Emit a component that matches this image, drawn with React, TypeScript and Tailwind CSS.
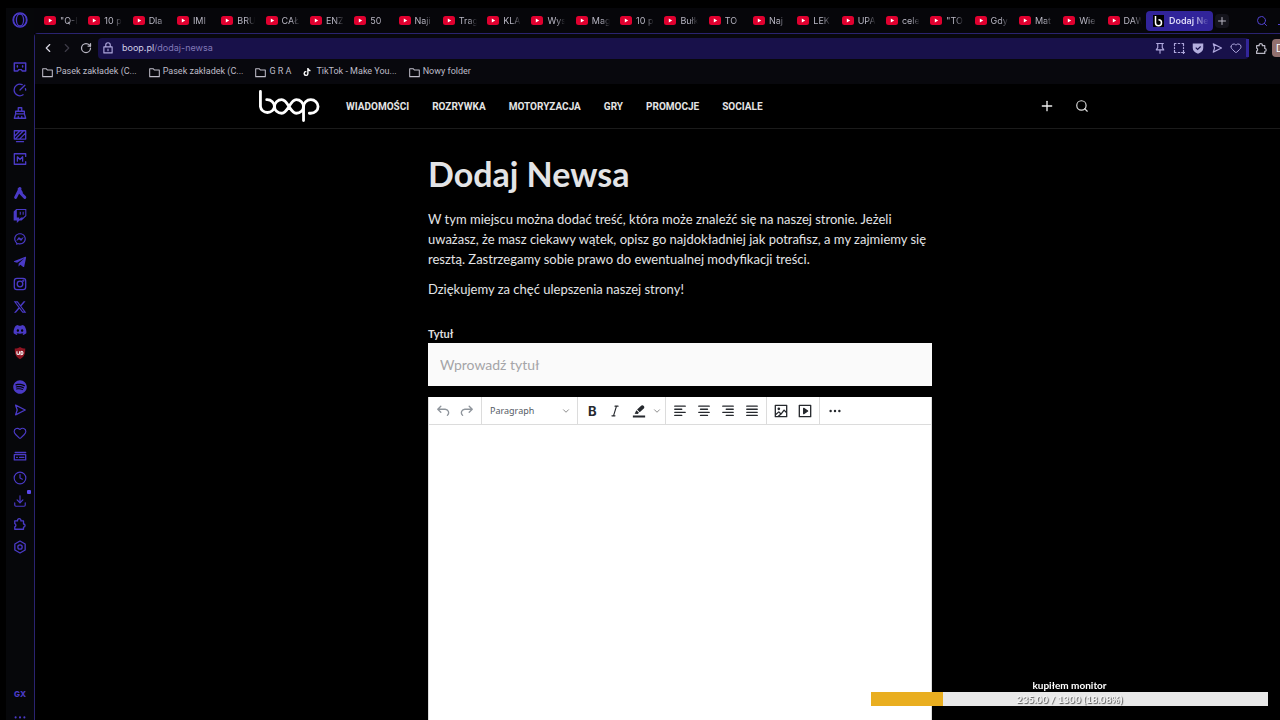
import type { ReactNode } from "react";
import {
  ChevronDown,
  ChevronLeft,
  ChevronRight,
  Clock,
  Download,
  Heart,
  Plus,
  RotateCw,
  Search,
} from "lucide-react";
import { FaDiscord, FaSpotify, FaTelegramPlane, FaTiktok, FaTwitch } from "react-icons/fa";
import { FaXTwitter } from "react-icons/fa6";
import { RiMessengerLine } from "react-icons/ri";

const tabs = [
  '"Q-I', "10 p", "Dla", "IMI", "BRU", "CAŁ", "ENZ", "50", "Naji", "Trag", "KLA", "Wys", "Mag",
  "10 p", "Bułk", "TO", "Naj", "LEK", "UPA", "cele", '"TO', "Gdy", "Mat", "Wie", "DAW",
];

const bookmarks = ["Pasek zakładek (C...", "Pasek zakładek (C...", "G R A", "TikTok - Make You...", "Nowy folder"];

const navigation = ["WIADOMOŚCI", "ROZRYWKA", "MOTORYZACJA", "GRY", "PROMOCJE", "SOCIALE"];

function Icon({ children, className = "size-3.5", width = 1.5 }: { children: ReactNode; className?: string; width?: number }) {
  return (
    <svg viewBox="0 0 16 16" className={className} fill="none" stroke="currentColor" strokeWidth={width} strokeLinejoin="round" strokeLinecap="round" aria-hidden="true">
      {children}
    </svg>
  );
}

const sendPath = <path d="M3 2.5 14 8 3 13.5 4.8 8Z" />;
const puzzlePath = (
  <path d="M2 4.500h3.200a2 2 0 1 1 3.800 0h3V8a1.800 1.800 0 1 1 0 3.600V14H2v-2.800a1.900 1.900 0 0 0 0-3.600Z" />
);

const topTools: [string, ReactNode][] = [
  ["Games", <Icon width={1.700}><path d="M1.500 3.500h13v9h-4L9.500 11h-3l-1 1.500h-4Z" /><path d="M5 6.500v1.500M11 6.500v1.500" /></Icon>],
  ["GX Control", <Icon><path d="M11.500 13.500A6.600 6.600 0 1 1 10.500 1.900M8 8l5.500-5.500M14.200 6.500l.3 1.500" /></Icon>],
  ["GX Cleaner", <Icon><path d="M6 6V2h4v4M3 6h10v3H3ZM3 9l-1.500 5h13L13 9M6 14v-2M10 14v-2" /></Icon>],
  ["Wallpapers", <Icon><path d="M1.500 2h13v9.500h-13ZM4 14.500h8M2 8l6-6M3 11l9-9M8 11l6-6" /></Icon>],
  ["Mods", <Icon><path d="M14.500 5V2h-13v12h13v-3M5 10.500v-5l3 3 3-3v5" /></Icon>],
];

const socialTools: [string, ReactNode][] = [
  ["Aria", <Icon width={3.400}><path d="M3 13 8 3M8.500 8l5 5" /><path d="M7 3.500l2.500 4" /></Icon>],
  ["Twitch", <FaTwitch className="size-3.5" />],
  ["Messenger", <RiMessengerLine className="size-3.5" />],
  ["Telegram", <FaTelegramPlane className="size-3.5" />],
  ["Instagram", <Icon><rect x="1.500" y="1.500" width="13" height="13" rx="3" /><circle cx="8" cy="8" r="3.200" /><circle cx="11.800" cy="4.200" r=".5" /></Icon>],
  ["X", <FaXTwitter className="size-3.5" />],
  ["Discord", <FaDiscord className="size-3.5" />],
  ["uBlock", (
    <svg viewBox="0 0 16 16" className="size-3.5" aria-hidden="true">
      <path d="M8 1c2 1.500 4 1.800 6 1.800C14 9 13 12.500 8 15 3 12.500 2 9 2 2.800 4 2.800 6 2.500 8 1Z" fill="#8d1422" />
      <path d="M4.500 6v2.500c0 1.500 3 1.500 3 0V6M9.200 6v4c3 0 3-4 0-4" fill="none" stroke="#eee" strokeWidth="1.300" />
    </svg>
  )],
];

const browserTools: [string, ReactNode][] = [
  ["Player", <FaSpotify className="size-3.5" />],
  ["My Flow", <Icon>{sendPath}</Icon>],
  ["Pinboards", <Heart className="size-3.5" />],
  ["News", <Icon><path d="M2.500 4h12M1.500 6.500h13v6h-13ZM4 9.500h1M7.500 9.500h5" /></Icon>],
  ["History", <Clock className="size-3.5" />],
  ["Downloads", <Download className="size-3.5" />],
  ["Extensions", <Icon>{puzzlePath}</Icon>],
  ["Settings", <Icon><path d="M8 1.200 13.900 4.600v6.800L8 14.800 2.100 11.400V4.600Z" /><circle cx="8" cy="8" r="2.500" /></Icon>],
];

function ToolGroup({ tools, className }: { tools: [string, ReactNode][]; className: string }) {
  return (
    <div className={`flex w-full flex-col ${className}`}>
      {tools.map(([name, icon]) => (
        <button key={name} aria-label={name} className="relative flex flex-1 items-center justify-center">
          {icon}
          {name === "Downloads" && <span className="absolute top-0 right-[3px] size-1 rounded-[1px] bg-[#5a48ea]" />}
        </button>
      ))}
    </div>
  );
}

function Sidebar() {
  return (
    <aside className="flex w-7 shrink-0 flex-col items-center bg-[#06070a] text-[#4a3ac6]">
      <button aria-label="Opera GX" className="mt-1 flex h-4 items-center">
        <svg viewBox="0 0 16 16" className="size-4" fill="none" stroke="currentColor" strokeWidth="1.300" aria-hidden="true">
          <circle cx="8" cy="8" r="7" />
          <ellipse cx="8" cy="8" rx="3.600" ry="6" />
          <path d="M6 1.500a7 7 0 0 0 0 13M10 1.500a7 7 0 0 1 0 13" />
        </svg>
      </button>
      <ToolGroup tools={topTools} className="mt-[27px] h-[115px]" />
      <ToolGroup tools={socialTools} className="mt-3 h-[182px]" />
      <ToolGroup tools={browserTools} className="mt-3 h-[182px]" />
      <div className="mt-auto flex flex-col items-center">
        <span className="text-[8px] leading-4 font-extrabold">GX</span>
        <button aria-label="More" className="flex h-[18px] items-end">
          <Icon width={2.400}><path d="M3 13h0M8 13h0M13 13h0" /></Icon>
        </button>
      </div>
    </aside>
  );
}

function TabStrip() {
  return (
    <div className="flex h-[25px] shrink-0 items-center bg-[#06060a] text-[9px] text-[#b9b7c4]">
      <div role="tablist" className="flex w-[1110px] shrink-0 items-center pl-0.5">
        {tabs.map((title, index) => (
          <button key={index} role="tab" className="flex min-w-0 flex-1 items-center gap-1 pl-2">
            <svg viewBox="0 0 12 9" className="h-[9px] w-3 shrink-0" aria-hidden="true">
              <rect width="12" height="9" rx="2.500" fill="#e0002f" />
              <path d="M4.800 2.500v4l3.400-2Z" fill="#fff" />
            </svg>
            <span className="w-[18px] overflow-hidden whitespace-nowrap text-left [mask-image:linear-gradient(to_right,#000_50%,transparent)]">
              {title}
            </span>
          </button>
        ))}
      </div>
      <button role="tab" aria-selected="true" className="ml-0.5 flex h-5 w-[67px] shrink-0 items-center gap-[5px] rounded-sm bg-[#31249a] pl-[7px] font-semibold text-[#dcd9f5]">
        <span className="flex h-3 w-[11px] shrink-0 items-center justify-center bg-black">
          <svg viewBox="0 0 11 12" className="h-3 w-[11px]" fill="none" stroke="#fff" strokeWidth="1.500" aria-hidden="true">
            <path d="M2.500 1v6.800a3 3 0 1 0 3-3" />
          </svg>
        </span>
        <span className="overflow-hidden whitespace-nowrap [mask-image:linear-gradient(to_right,#000_60%,transparent)]">Dodaj Ne</span>
      </button>
      <button aria-label="New tab" className="ml-0.5 flex size-3.5 shrink-0 items-center justify-center rounded-sm bg-[#14141c]">
        <Plus className="size-3" />
      </button>
      <button aria-label="Search tabs" className="ml-[27px] text-[#5142d0]">
        <Search className="size-3" />
      </button>
      <button aria-label="Minimize" className="ml-2.5 h-2 w-3 border-b border-[#5142d0]" />
    </div>
  );
}

function AddressBar() {
  return (
    <div className="flex h-[26px] shrink-0 items-center bg-[#08080d] pt-0.5 pl-[3px] text-[#b9b7c4]">
      <button aria-label="Back" className="flex w-[19px] justify-center text-[#dad8e4]"><ChevronLeft className="size-3.5" /></button>
      <button aria-label="Forward" className="flex w-[19px] justify-center text-[#3d3b47]"><ChevronRight className="size-3.5" /></button>
      <button aria-label="Reload" className="flex w-[19px] justify-center"><RotateCw className="size-3" strokeWidth={2.500} /></button>
      <div className="ml-[3px] flex h-[21px] w-[1151px] shrink-0 items-center rounded-sm bg-[#18114a] pl-1 text-[#b0a9de]">
        <Icon className="size-3"><path d="M2.500 6.500h11v8h-11ZM5 6.500V4a3 3 0 0 1 6 0v2.500M8 9.500v2" /></Icon>
        <a href="#address" className="ml-2 text-[9px] text-[#8279b8]">
          <span className="text-[#d2cfe6]">boop.pl</span>/dodaj-newsa
        </a>
        <div className="ml-auto flex items-center gap-[7px]">
          <button aria-label="Pin"><Icon className="size-3"><path d="M3.500 2h9M5 2v5.500L3 10.500h10l-2-3V2M8 10.500V15" /></Icon></button>
          <button aria-label="Snapshot"><Icon className="size-3" width={1.600}><path d="M2 5V2h2M7 2h2M12 2h2v3M14 7.500v1M2 7.500v1M2 11v3h2M7 14h2M14 11v5M11.500 14H16" /></Icon></button>
          <button aria-label="Ad blocker">
            <svg viewBox="0 0 16 16" className="size-3" aria-hidden="true">
              <path d="M1 2h14v6c0 4-3 6-7 7.500C4 14 1 12 1 8Z" fill="#b3aedd" />
              <path d="m5 7.500 2.500 2.500L11.500 6" fill="none" stroke="#18114a" strokeWidth="1.600" />
            </svg>
          </button>
          <button aria-label="My Flow"><Icon className="size-3">{sendPath}</Icon></button>
          <button aria-label="Pinboards"><Heart className="size-3" /></button>
        </div>
        <span className="ml-1 h-[18px] w-[3px] bg-[#33269b]" />
      </div>
      <button aria-label="Extensions" className="ml-1.5"><Icon className="size-[13px]">{puzzlePath}</Icon></button>
      <button className="ml-1 h-[18px] w-[18px] shrink-0 rounded-sm bg-[#92706e] pl-1 text-left text-[10px] text-white">D</button>
    </div>
  );
}

function Bookmarks() {
  return (
    <div className="flex h-6 shrink-0 items-center gap-3 bg-[#08080d] pl-[7px] font-['Roboto',sans-serif] text-[9px] text-[#bebcc8]">
      {bookmarks.map((name, index) => (
        <a key={index} href="#bookmark" className="flex items-center gap-[3px] whitespace-nowrap">
          {name.startsWith("TikTok") ? (
            <FaTiktok className="mr-0.5 size-2 text-white" />
          ) : (
            <Icon className="size-[11px]"><path d="M1 2.500h5l2 2h7v9.500H1Z" /></Icon>
          )}
          {name}
        </a>
      ))}
    </div>
  );
}

function SiteHeader() {
  return (
    <header className="border-b border-[#1b1b1b]">
      <div className="mx-auto flex h-11 w-full max-w-[844px] items-center">
        <a href="#home" aria-label="boop">
          <svg viewBox="0 0 64 35" className="h-[34px] w-[62px]" fill="none" stroke="#fff" strokeWidth="2.900" strokeLinecap="round" aria-hidden="true">
            <path d="M2.500 2.500V18A7.300 7 0 0 0 17 18 7.500 7 0 0 0 9.500 11H9" />
            <path d="M17 18A7.500 7 0 0 1 24.500 11C31 11 33 25 39.500 25A7.500 7 0 0 0 47 18 7.500 7 0 0 0 39.500 11C33 11 31 25 24.500 25A7.500 7 0 0 1 17 18Z" />
            <path d="M47 32.500V18A7.500 7 0 1 1 54.500 25H53" />
          </svg>
        </a>
        <nav className="ml-[26px] flex gap-[23px] font-['Roboto',sans-serif] text-[10px] font-bold text-[#e4e4e4]">
          {navigation.map((item) => (
            <a key={item} href="#section">{item}</a>
          ))}
        </nav>
        <button aria-label="Dodaj" className="ml-auto text-[#eee]"><Plus className="size-4" /></button>
        <button aria-label="Szukaj" className="mr-[13px] ml-5 text-[#ddd]"><Search className="size-3.5" /></button>
      </div>
    </header>
  );
}

const alignments: [string, string][] = [
  ["Align left", "M2 2.500h12M2 6h8M2 9.500h12M2 13h8"],
  ["Align center", "M2 2.500h12M4 6h8M2 9.500h12M4 13h8"],
  ["Align right", "M2 2.500h12M6 6h8M2 9.500h12M6 13h8"],
  ["Justify", "M2 2.500h12M2 6h12M2 9.500h12M2 13h12"],
];

function EditorToolbar() {
  return (
    <div className="flex h-7 items-stretch divide-x divide-[#dcdcdc] border-b border-[#dcdcdc] text-[#26292e]">
      <div className="flex w-[53px] items-center justify-center gap-2.5 text-[#8f959c]">
        <button type="button" aria-label="Undo"><Icon><path d="M5.500 2.500 2 6l3.500 3.500M2 6h8a4 4 0 0 1 3 7" /></Icon></button>
        <button type="button" aria-label="Redo"><Icon><path d="M10.500 2.500 14 6l-3.500 3.500M14 6H6a4 4 0 0 0-3 7" /></Icon></button>
      </div>
      <div className="relative flex w-24 items-center">
        <select aria-label="Block format" className="w-full appearance-none bg-transparent pl-2 font-['Noto_Sans',sans-serif] text-[9px] text-[#555c66]">
          <option>Paragraph</option>
        </select>
        <ChevronDown className="pointer-events-none absolute right-1.5 size-2.5 text-[#777]" />
      </div>
      <div className="flex w-[88px] items-center pl-1">
        <button type="button" aria-label="Bold" className="flex w-6 justify-start pl-1.5 text-[13px] leading-4 font-bold">B</button>
        <button type="button" aria-label="Italic" className="flex w-[18px] justify-center"><Icon width={1.300}><path d="M8 2.500h3.500M4.500 13.500H8M9.700 2.500l-3.400 11" /></Icon></button>
        <button type="button" aria-label="Highlight" className="ml-2">
          <svg viewBox="0 0 16 16" className="size-3.5" fill="currentColor" aria-hidden="true">
            <path d="M1 13h14v2.500H1ZM3 11l2-4 3 3-1.500 1.500ZM5.800 6.300l5-4.500a2.200 2.200 0 0 1 3 3l-5 4.500Z" />
          </svg>
        </button>
        <button type="button" aria-label="Highlight colors" className="ml-1.5 text-[#777]"><ChevronDown className="size-2.5" /></button>
      </div>
      <div className="flex w-[101px] items-center justify-center gap-2.5">
        {alignments.map(([name, path]) => (
          <button key={name} type="button" aria-label={name}><Icon><path d={path} /></Icon></button>
        ))}
      </div>
      <div className="flex w-[53px] items-center justify-center gap-2.5">
        <button type="button" aria-label="Image"><Icon><path d="M1.500 1.500h13v13h-13ZM2 12l3.500-3 2.500 2.500L11.500 7l3 3M5 14l3-2.500" /><circle cx="5.500" cy="5.500" r=".8" /></Icon></button>
        <button type="button" aria-label="Media"><Icon><path d="M1.500 1.500h13v13h-13Z" /><path d="M6.500 5v6L11 8Z" fill="currentColor" /></Icon></button>
      </div>
      <div className="flex items-center pl-2">
        <button type="button" aria-label="More"><Icon width={2.800}><path d="M3 8h0M8 8h0M13 8h0" /></Icon></button>
      </div>
    </div>
  );
}

function NewsForm() {
  return (
    <form className="mt-[26px] flex flex-1 flex-col">
      <label htmlFor="title" className="text-[11px] leading-[18px] font-bold text-[#dedede]">Tytuł</label>
      <input id="title" placeholder="Wprowadź tytuł" className="h-[43px] w-full bg-[#fafafa] px-3 text-[14px] text-black outline-none placeholder:text-[#a5a5a8]" />
      <div className="mt-[11px] flex flex-1 flex-col border-x border-[#dcdcdc] bg-white font-['Inter',sans-serif]">
        <EditorToolbar />
        <textarea aria-label="Treść" className="w-full flex-1 resize-none bg-white p-3 text-black outline-none" />
      </div>
    </form>
  );
}

function GoalOverlay() {
  const collected = 235;
  const goal = 1300;
  const percent = (collected / goal) * 100;
  return (
    <div className="fixed right-3 bottom-3.5 w-[397px] text-center font-['Lato',sans-serif] text-[10px] font-bold text-white">
      <div className="leading-[14px]">kupiłem monitor</div>
      <div className="relative h-3.5 bg-[#e8e8e8]">
        <div className="h-full bg-[#e9ae20]" style={{ width: `${percent}%` }} />
        <div className="absolute inset-0 leading-[14px] text-[#f4f4f4] [text-shadow:1px_1px_1px_#555]">
          {collected.toFixed(2)} / {goal} ({percent.toFixed(2)}%)
        </div>
      </div>
    </div>
  );
}

export default function App() {
  return (
    <div className="flex h-screen overflow-hidden bg-black pt-2 pl-1.5 font-['Inter',sans-serif]">
      <Sidebar />
      <div className="flex w-[calc(100%+17px)] shrink-0 flex-col">
        <TabStrip />
        <div className="flex min-h-0 flex-1 flex-col rounded-tl-sm border-t border-l border-[#2a2370]">
          <AddressBar />
          <Bookmarks />
          <div className="flex min-h-0 flex-1 flex-col bg-black">
            <SiteHeader />
            <main className="mx-auto flex w-full max-w-[504px] flex-1 flex-col pt-[23px] font-['Lato',sans-serif] text-[#e3e4e6]">
              <h1 className="text-[34px] leading-[44px] font-bold">Dodaj Newsa</h1>
              <p className="mt-[13px] text-[13px] leading-5">
                W tym miejscu można dodać treść, która może znaleźć się na naszej stronie. Jeżeli uważasz, że masz ciekawy wątek, opisz go najdokładniej jak potrafisz, a my zajmiemy się resztą. Zastrzegamy sobie prawo do ewentualnej modyfikacji treści.
              </p>
              <p className="mt-2.5 text-[13px] leading-5">Dziękujemy za chęć ulepszenia naszej strony!</p>
              <NewsForm />
            </main>
          </div>
        </div>
      </div>
      <GoalOverlay />
    </div>
  );
}
